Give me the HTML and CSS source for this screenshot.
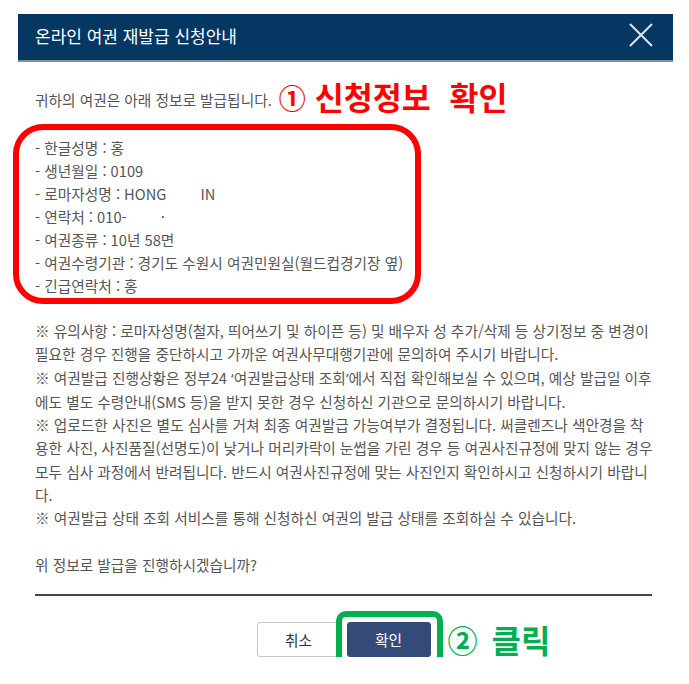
FILE: index.html
```html
<!DOCTYPE html>
<html lang="ko">
    <head>
        <title>온라인 여권 재발급 신청안내</title>
        <meta charset="utf-8">
        <meta name="viewport" content="width=device-width, initial-scale=1.0">
        <link rel="stylesheet" href="styles.css">
    </head>
    <body>
        <div class="modal">

            <div class="modal-head">
                <h2>온라인 여권 재발급 신청안내</h2>
                <button type="button" class="close" aria-label="닫기">
                    <svg width="24" height="24" viewBox="0 0 24 24">
                        <path d="M1 1 L23 23 M23 1 L1 23" stroke="#dfe5ee" stroke-width="2" fill="none"/>
                    </svg>
                </button>
            </div>

            <div class="modal-body">
                <p class="intro">귀하의 여권은 아래 정보로 발급됩니다.<span class="mark-red"><span class="num">①</span><span class="txt">신청정보 확인</span></span></p>

                <ul class="info">
                    <li>- 한글성명 : 홍</li>
                    <li>- 생년월일 : 0109</li>
                    <li>- 로마자성명 : HONG<span class="gap-l"></span>IN</li>
                    <li>- 연락처 : 010-<span class="gap-s"></span>·</li>
                    <li>- 여권종류 : 10년 58면</li>
                    <li>- 여권수령기관 : 경기도 수원시 여권민원실(월드컵경기장 옆)</li>
                    <li>- 긴급연락처 : 홍</li>
                </ul>

                <div class="notes">
                    <p>※ 유의사항 : 로마자성명(철자, 띄어쓰기 및 하이픈 등) 및 배우자 성 추가/삭제 등 상기정보 중 변경이<br>필요한 경우 진행을 중단하시고 가까운 여권사무대행기관에 문의하여 주시기 바랍니다.</p>
                    <p>※ 여권발급 진행상황은 정부24 <span class="q">‘</span>여권발급상태 조회<span class="q">’</span>에서 직접 확인해보실 수 있으며, 예상 발급일 이후<br>에도 별도 수령안내(SMS 등)을 받지 못한 경우 신청하신 기관으로 문의하시기 바랍니다.</p>
                    <p>※ 업로드한 사진은 별도 심사를 거쳐 최종 여권발급 가능여부가 결정됩니다. 써클렌즈나 색안경을 착<br>용한 사진, 사진품질(선명도)이 낮거나 머리카락이 눈썹을 가린 경우 등 여권사진규정에 맞지 않는 경우<br>모두 심사 과정에서 반려됩니다. 반드시 여권사진규정에 맞는 사진인지 확인하시고 신청하시기 바랍니<br>다.</p>
                    <p>※ 여권발급 상태 조회 서비스를 통해 신청하신 여권의 발급 상태를 조회하실 수 있습니다.</p>
                </div>

                <p class="question">위 정보로 발급을 진행하시겠습니까?</p>

                <div class="modal-foot">
                    <button type="button" class="btn btn-cancel">취소</button>
                    <span class="confirm-wrap">
                        <button type="button" class="btn btn-ok">확인</button>
                        <span class="mark-green"><span class="num">②</span>클릭</span>
                    </span>
                </div>
            </div>

        </div>
    </body>
</html>
```

FILE: styles.css
```css
body {
    margin: 0;
    padding-top: 14px;
    background: #fff;
    font-family: "Noto Sans CJK KR", "Noto Sans", sans-serif;
    font-size: 14.7px;
    color: #555;
}
.modal {
    width: 655px;
    margin-left: 18px;
}
.modal-head {
    display: flex;
    align-items: center;
    justify-content: space-between;
    height: 46px;
    padding: 0 20px 0 17px;
    background: #053763;
    border-bottom: 2px solid #7890ab;
}
.modal-head h2 {
    margin: 0 0 3px;
    font-size: 17px;
    font-weight: 400;
    color: #fff;
}
.close {
    display: flex;
    padding: 0;
    margin-bottom: 4px;
    border: 0;
    background: none;
}
.modal-body {
    padding: 26px 21px 0 17px;
    line-height: 23.3px;
}
.intro {
    display: flex;
    align-items: center;
    height: 23px;
    margin: 0;
}
.mark-red {
    display: flex;
    align-items: center;
    margin: -5px 0 0 7px;
    font-weight: 700;
    color: #ff0000;
    line-height: 1;
}
.mark-red .num {
    margin-right: 9px;
    font-size: 27px;
}
.mark-red .txt {
    font-size: 31.5px;
    word-spacing: 10px;
}
.info {
    width: 408px;
    box-sizing: border-box;
    margin: 13px 0 0 -22px;
    padding: 6px 0 1px 16px;
    list-style: none;
    border: 6px solid #ff0000;
    border-radius: 30px;
    line-height: 23px;
}
.gap-l {
    display: inline-block;
    width: 34px;
}
.gap-s {
    display: inline-block;
    width: 34px;
}
.notes {
    margin-top: 15px;
    white-space: nowrap;
}
.notes p {
    margin: 0;
}
.q {
    font-family: "Noto Sans", sans-serif;
}
.question {
    margin: 23px 0 0;
    padding-bottom: 18px;
    border-bottom: 2px solid #444;
}
.modal-foot {
    display: flex;
    justify-content: center;
    gap: 6px;
    padding-top: 26px;
}
.btn {
    width: 84px;
    height: 35px;
    border-radius: 3px;
    font-family: inherit;
    font-size: 14.7px;
}
.btn-cancel {
    background: #fff;
    border: 1px solid #c8c8c8;
    color: #333;
}
.btn-ok {
    position: relative;
    background: #344b79;
    border: 1px solid #344b79;
    color: #fff;
}
.confirm-wrap {
    position: relative;
    display: flex;
}
.confirm-wrap::after {
    content: "";
    position: absolute;
    top: -11px;
    bottom: -11px;
    left: -11px;
    right: -12px;
    border: 6px solid #00b050;
    border-radius: 10px;
    box-shadow: inset 0 0 0 5px #fff;
}
.mark-green {
    position: absolute;
    left: calc(100% + 17px);
    top: 50%;
    display: flex;
    align-items: center;
    transform: translateY(-50%);
    white-space: nowrap;
    font-size: 32px;
    font-weight: 700;
    color: #00b050;
    line-height: 1;
}
.mark-green .num {
    margin-right: 14px;
    font-size: 30px;
}
```
